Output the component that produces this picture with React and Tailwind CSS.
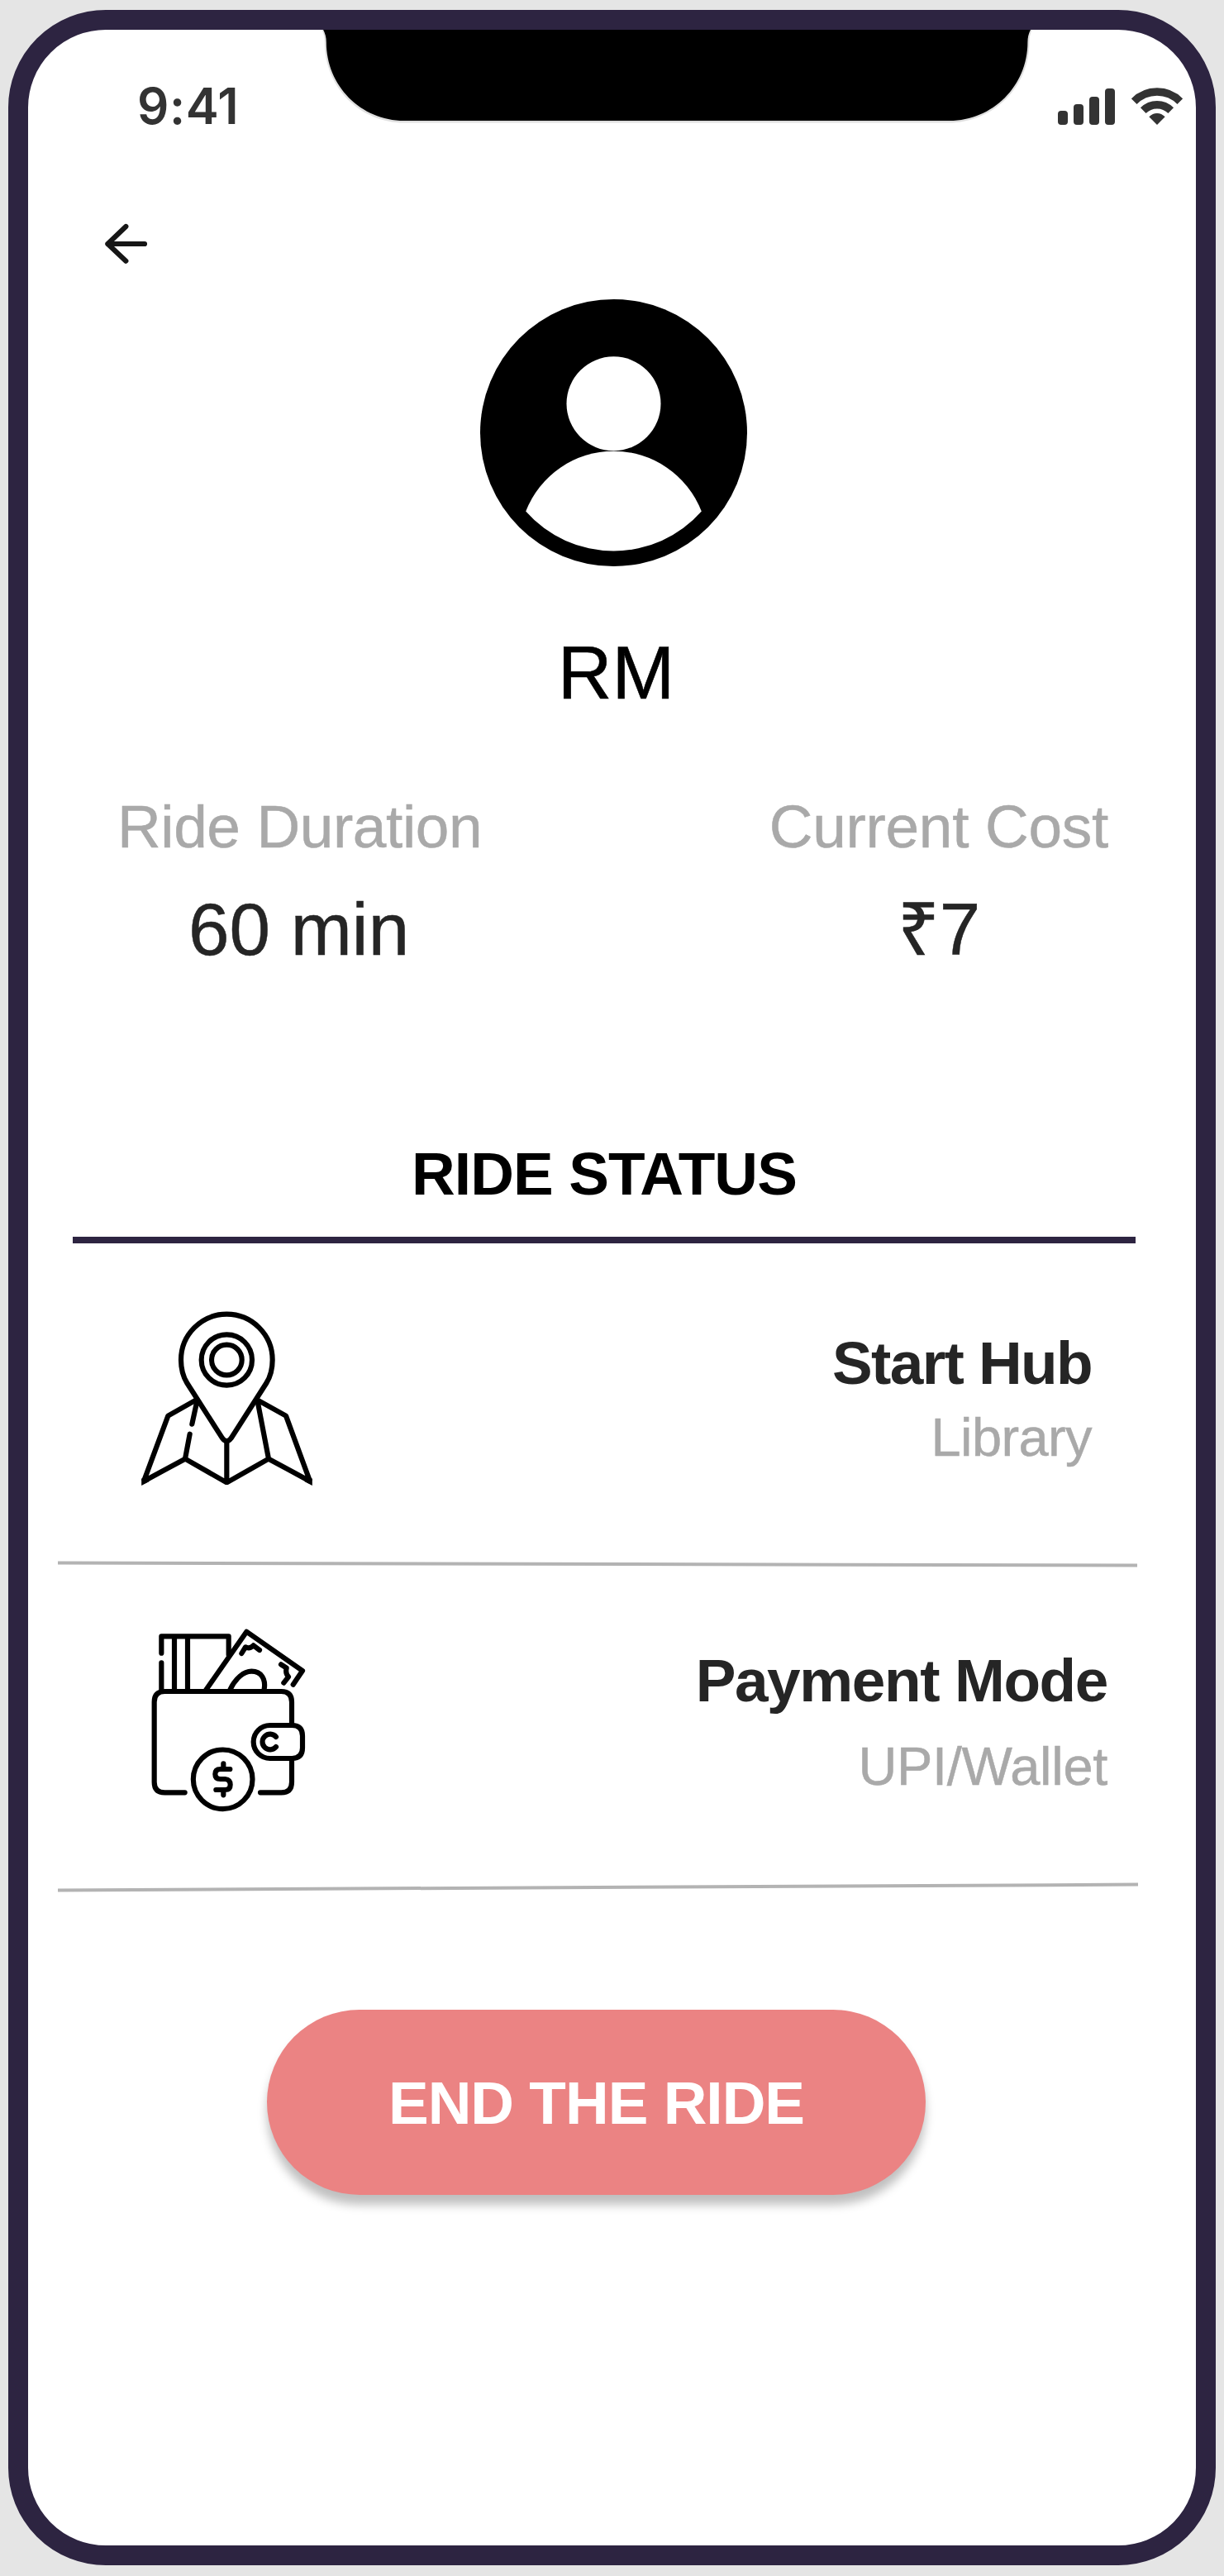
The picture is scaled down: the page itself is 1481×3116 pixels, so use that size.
const ARIAL = "font-['Liberation_Sans',Arial,sans-serif]";

function Notch() {
  return (
    <svg className="absolute left-[354px] top-0 h-[114px] w-[863px]" viewBox="388 36 863 114" fill="none">
      <path
        d="M389 35 Q392.800 42 392.800 51 C392.800 106 436 148.500 489 148.500 H1148 C1201 148.500 1245.500 106 1245.500 51 Q1245.500 42 1249 35 Z"
        fill="#e0e0e0"
      />
      <path
        d="M390.5 35 Q394.8 42 394.8 51 C394.8 104 437 146 489 146 H1149 C1201 146 1243.4 104 1243.4 51 Q1243.4 42 1247.5 35 Z"
        fill="#000"
      />
    </svg>
  );
}

function Signal() {
  return (
    <div className="flex items-end gap-[7px]">
      <span className="h-[17px] w-3 rounded bg-[#333333]" />
      <span className="h-[25px] w-3 rounded bg-[#333333]" />
      <span className="h-[34px] w-3 rounded bg-[#333333]" />
      <span className="h-11 w-3 rounded bg-[#333333]" />
    </div>
  );
}

function Wifi() {
  return (
    <svg className="h-[45px] w-[62px]" viewBox="563 317 186 135" fill="none" stroke="#333333" strokeWidth="28">
      <path d="M572.6 367 A117 117 0 0 1 739.4 367" />
      <path d="M605.8 400 A71 71 0 0 1 706.2 400" />
      <path d="M656 452 L627 423 Q640 410 656 410 Q672 410 685 423 Z" fill="#333333" stroke="none" />
    </svg>
  );
}

function BackArrow() {
  return (
    <svg className="h-[50px] w-[52px]" viewBox="380 810 156 150" fill="none" stroke="#161616" strokeWidth="18.5" strokeLinecap="round" strokeLinejoin="round">
      <path d="M524 885 H390 M456 822 L390 885 L456 947" />
    </svg>
  );
}

function Avatar() {
  return (
    <svg className="h-[323px] w-[323px]" viewBox="580.7 362 323 323">
      <circle cx="742.2" cy="523.5" r="161.5" fill="#000" />
      <circle cx="742.2" cy="488.3" r="57" fill="#fff" />
      <path d="M635.9 618.5 A114 114 0 0 1 848.5 618.5 A141.7 141.7 0 0 1 635.9 618.5 Z" fill="#fff" />
    </svg>
  );
}

function MapPin() {
  return (
    <svg className="h-[250px] w-[250px]" viewBox="0 0 750 750" fill="none" stroke="#000" strokeWidth="18.5">
      <path d="M357 509 L229 309 C214 285 207 255 207 225 A166 166 0 0 1 539 225 C539 255 532 285 517 309 L389 509 Q373 530 357 509 Z" />
      <circle cx="373" cy="225" r="92" />
      <circle cx="373" cy="225" r="55" />
      <path strokeLinejoin="bevel" d="M262 370 L160 428 L72 665 L222 584 L373 670 L525 584 L675 665 L588 428 L484 370 M484 370 L525 584 M373 520 V670" />
      <path strokeLinecap="round" d="M265 375 L247 458 M239 494 L222 584" />
      <path fill="#000" stroke="none" d="M63.5 655 V681 L92 666 Z M683.5 655 V681 L655 666 Z" />
    </svg>
  );
}

function Wallet() {
  return (
    <svg className="h-[260px] w-[230px]" viewBox="0 0 690 780" fill="none" stroke="#000" strokeWidth="18.5" strokeLinecap="round" strokeLinejoin="round">
      <path d="M191 655 H118 Q80 655 80 617 V326 Q80 288 118 288 H541 Q579 288 579 326 V405 M579 540 V617 Q579 655 541 655 H465" />
      <path d="M106 149 V88 H350 V155 M106 184 V288 M153 88 V288 M201 88 V288" />
      <path d="M268 282 L415 71 L618 213 L584 263" />
      <path d="M356 280 C375 240 405 215 433 215 C470 215 485 245 479 280" />
      <path d="M397 150 L411 127 Q426 135 440 121 L462 138 M540 190 L560 203 Q555 222 567 235 L550 257" />
      <path d="M500 411 H580 Q618 411 618 449 V493 Q618 531 580 531 H500 A60 60 0 0 1 500 411 Z" />
      <path d="M522 453 A28 28 0 1 0 522 489" />
      <circle cx="329" cy="607" r="107.5" />
      <path d="M331 550 V568 M355 570 H320 Q301 570 301 588 Q301 606 320 606 H337 Q356 608 356 626 Q356 645 337 645 H304 M331 645 V664" />
    </svg>
  );
}

export default function App() {
  return (
    <div className={`h-[3116px] w-[1481px] bg-[#e5e5e5] pl-[10px] pt-3 ${ARIAL}`}>
      <main className="relative flex h-[3091px] w-[1461px] flex-col overflow-hidden rounded-[118px] border-24 border-[#2d2441] bg-white">
        <Notch />

        <header className="flex h-[234px] shrink-0 items-start justify-between pl-[132px] pr-[16px] pt-[62px]">
          <time className="font-['Inter',sans-serif] text-[60px] font-semibold leading-none tracking-[0.6px] text-[#333333]">9:41</time>
          <div className="mt-2 flex items-end gap-[20px]">
            <Signal />
            <Wifi />
          </div>
        </header>

        <button className="ml-[93px] h-[50px] w-[52px] shrink-0" aria-label="Back">
          <BackArrow />
        </button>

        <section className="mt-[42px] flex h-[601px] shrink-0 flex-col items-center gap-[83px] pl-[4px]">
          <Avatar />
          <h1 className="pl-[6px] text-[91px] leading-none text-black [-webkit-text-stroke:0.6px]">RM</h1>
        </section>

        <section className="flex h-[420px] shrink-0 justify-between pl-[108px] pr-[106px] [-webkit-text-stroke:0.5px]">
          <div className="flex flex-col items-center gap-[44px]">
            <span className="text-[73px] leading-none tracking-[-0.4px] text-[#a9a9a9]">Ride Duration</span>
            <span className="pr-[2px] text-[89px] leading-none text-[#252525]">60 min</span>
          </div>
          <div className="flex flex-col items-center gap-[44px]">
            <span className="text-[73px] leading-none tracking-[-0.3px] text-[#a9a9a9]">Current Cost</span>
            <span className="text-[89px] leading-none text-[#252525]">₹7</span>
          </div>
        </section>

        <h2 className="ml-[54px] h-[121px] w-[1286px] shrink-0 border-b-8 border-[#2d2441] text-center text-[73px] font-bold leading-none tracking-[-0.9px] text-black">
          RIDE STATUS
        </h2>

        <section className="flex h-[386px] shrink-0 justify-between pl-[116px] pr-[126px] pt-[66px]">
          <MapPin />
          <div className="flex flex-col items-end gap-[21px] pt-[42px]">
            <h3 className="text-[73px] font-bold leading-none tracking-[-1.6px] text-[#252525]">Start Hub</h3>
            <p className="text-[65px] leading-none tracking-[-0.6px] text-[#a9a9a9] [-webkit-text-stroke:0.5px]">Library</p>
          </div>
        </section>
        <div className="ml-[36px] h-[4px] w-[1306px] shrink-0 rotate-[0.13deg] bg-[#b3b3b3]" />

        <section className="flex h-[387px] shrink-0 justify-between pl-[126px] pr-[107px] pt-[56px]">
          <Wallet />
          <div className="flex flex-col items-end gap-[35px] pt-[46px]">
            <h3 className="text-[73px] font-bold leading-none tracking-[-1.4px] text-[#252525]">Payment Mode</h3>
            <p className="text-[65px] leading-none tracking-[-0.3px] text-[#a9a9a9] [-webkit-text-stroke:0.5px]">UPI/Wallet</p>
          </div>
        </section>
        <div className="ml-[36px] h-[4px] w-[1307px] shrink-0 -rotate-[0.3deg] bg-[#b3b3b3]" />

        <button className="ml-[289px] mt-[146px] h-[224px] w-[797px] shrink-0 rounded-full bg-[#eb8383] text-[73px] font-bold leading-none tracking-[-1px] text-white shadow-[0_12px_12px_rgba(0,0,0,0.25)]">
          END THE RIDE
        </button>
      </main>
    </div>
  );
}
